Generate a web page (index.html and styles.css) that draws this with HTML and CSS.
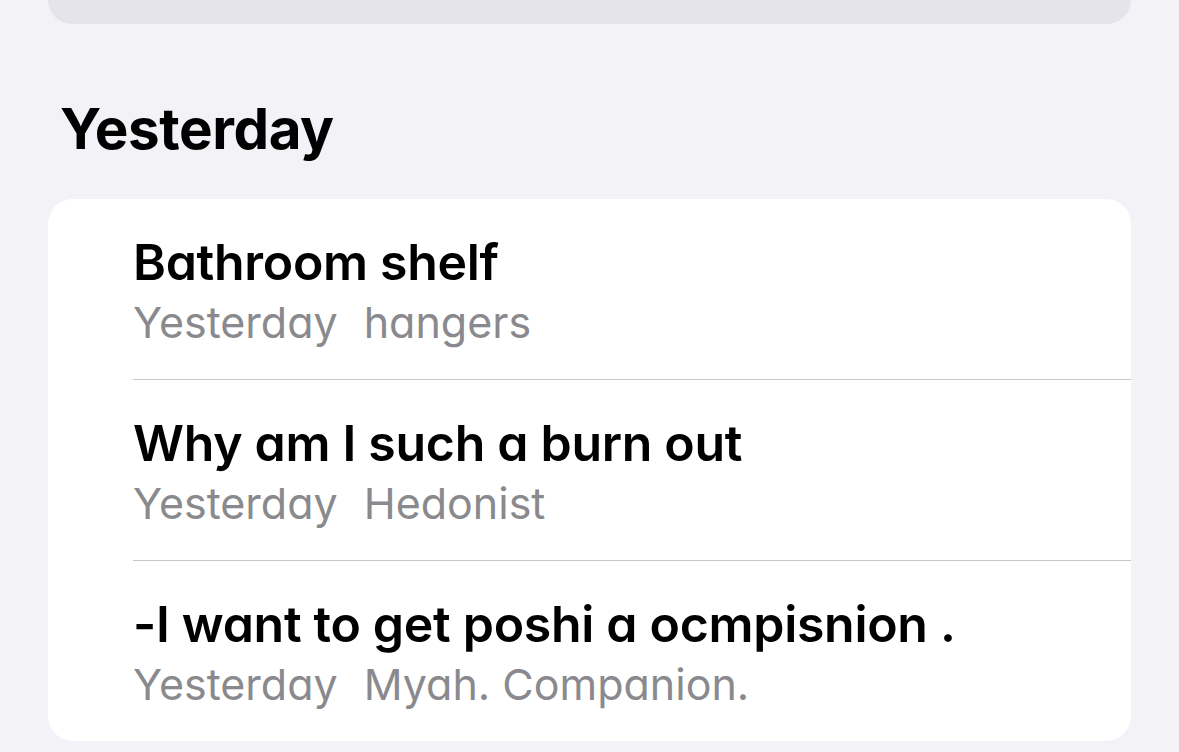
FILE: index.html
```html
<!DOCTYPE html>
<html>
<head>
  <title>Notes</title>
  <link rel="stylesheet" href="styles.css">
</head>
<body>
  <div class="page">
    <div class="search-card"></div>

    <h2 class="section-title">Yesterday</h2>

    <ul class="note-list">
      <li class="note">
        <div class="note-body">
          <div class="note-title">Bathroom shelf</div>
          <div class="note-meta"><span>Yesterday</span><span>hangers</span></div>
        </div>
      </li>
      <li class="note">
        <div class="note-body">
          <div class="note-title">Why am I such a burn out</div>
          <div class="note-meta"><span>Yesterday</span><span>Hedonist</span></div>
        </div>
      </li>
      <li class="note">
        <div class="note-body">
          <div class="note-title">-I want to get poshi a ocmpisnion .</div>
          <div class="note-meta"><span>Yesterday</span><span>Myah. Companion.</span></div>
        </div>
      </li>
    </ul>
  </div>
</body>
</html>
```

FILE: styles.css
```css
body {
  margin: 0;
  background: #f2f2f7;
  font-family: Inter, "Liberation Sans", sans-serif;
  color: #000;
}
.page {
  padding: 0 48px;
  height: 752px;
  overflow: hidden;
}
.search-card {
  height: 24px;
  background: #e4e4ea;
  border-radius: 0 0 25px 25px;
}
.section-title {
  margin: 0;
  padding: 72px 0 0 12px;
  height: 103px;
  font-size: 56.5px;
  line-height: 66px;
  font-weight: 700;
  letter-spacing: -0.4px;
}
.note-list {
  list-style: none;
  margin: 0;
  padding: 0;
  background: #fff;
  border-radius: 25px;
  overflow: hidden;
}
.note {
  padding-left: 85px;
}
.note-body {
  height: 181px;
  box-sizing: border-box;
  padding-top: 33px;
  border-bottom: 1px solid #c6c6c8;
  font-feature-settings: "cv11";
}
.note:last-child .note-body {
  height: 180px;
  border-bottom: none;
}
.note-title {
  font-size: 50px;
  line-height: 60px;
  font-weight: 600;
  letter-spacing: -0.3px;
}
.note-meta {
  display: flex;
  gap: 26px;
  font-size: 43px;
  line-height: 60px;
  color: #8a8a8e;
}
```
